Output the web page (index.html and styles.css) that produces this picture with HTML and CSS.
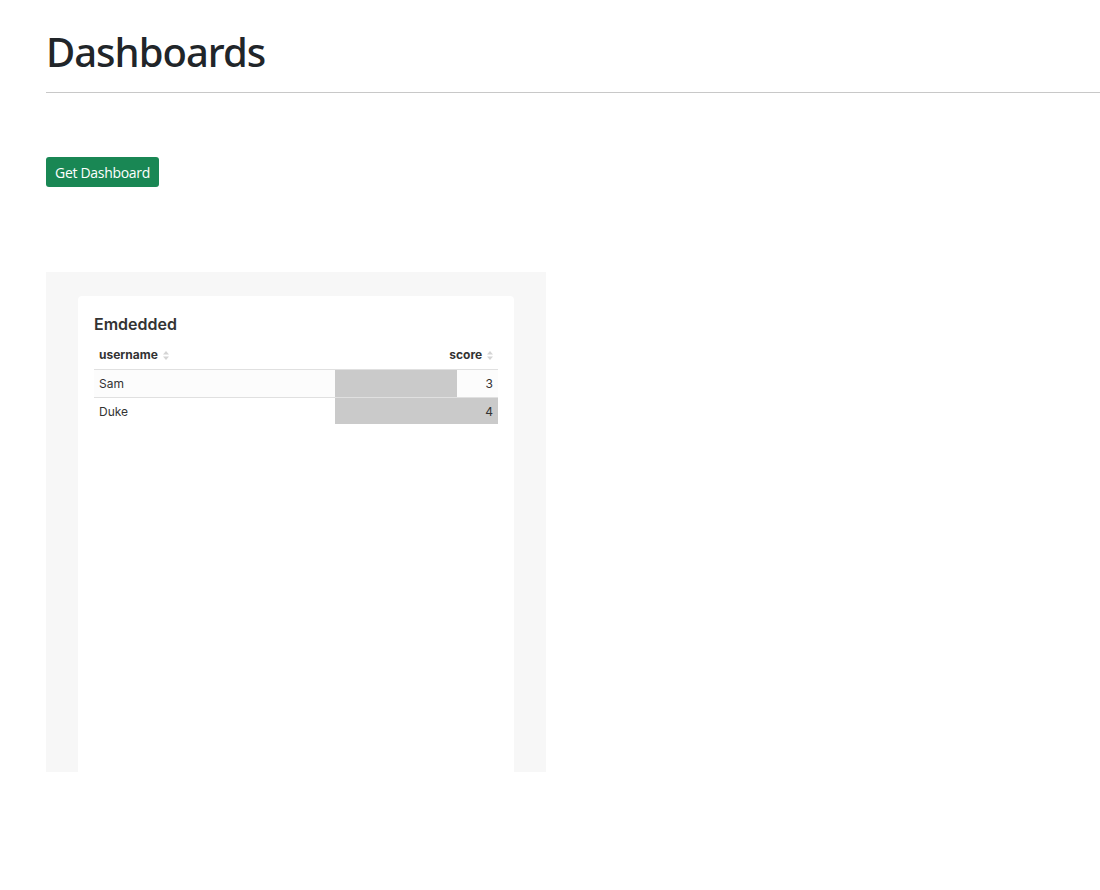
FILE: index.html
```html
<!DOCTYPE html>
<html>
<head>
<meta charset="utf-8">
<link rel="stylesheet" href="styles.css">
</head>
<body>
<div class="page">
  <h1 class="title">Dashboards</h1>
  <hr class="rule">
  <button class="btn">Get Dashboard</button>
  <div class="frame">
    <div class="card">
      <div class="card-title">Emdedded</div>
      <table class="grid">
        <thead>
          <tr>
            <th class="col-user">username <span class="sort"><svg width="6" height="9" viewBox="0 0 6 9"><path d="M3 0L6 3.5H0Z" fill="#d4d4d4"/><path d="M3 9L6 5.5H0Z" fill="#d4d4d4"/></svg></span></th>
            <th class="col-score">score <span class="sort"><svg width="6" height="9" viewBox="0 0 6 9"><path d="M3 0L6 3.5H0Z" fill="#d4d4d4"/><path d="M3 9L6 5.5H0Z" fill="#d4d4d4"/></svg></span></th>
          </tr>
        </thead>
        <tbody>
          <tr class="odd">
            <td class="col-user">Sam</td>
            <td class="col-score bar-cell"><div class="bar" style="width:75%"></div><span class="val">3</span></td>
          </tr>
          <tr>
            <td class="col-user">Duke</td>
            <td class="col-score bar-cell"><div class="bar" style="width:100%"></div><span class="val">4</span></td>
          </tr>
        </tbody>
      </table>
    </div>
  </div>
</div>
</body>
</html>
```
FILE: styles.css
```css
html, body {
  margin: 0;
  padding: 0;
  background: #fff;
}
.page {
  padding-left: 46px;
  font-family: "Open Sans", "Noto Sans", sans-serif;
}
.title {
  margin: 0;
  padding-top: 26px;
  font-family: "Noto Sans", "Open Sans", sans-serif;
  font-size: 40px;
  font-weight: 500;
  line-height: 52px;
  letter-spacing: -1px;
  color: #212529;
}
.rule {
  margin: 14px 0 0 0;
  border: 0;
  border-top: 1px solid #c8c8c8;
  height: 0;
}
.btn {
  display: block;
  margin-top: 64px;
  height: 30px;
  padding: 0 9px;
  background: #198754;
  color: #fff;
  border: 0;
  border-radius: 3px;
  font-family: "Open Sans", "Noto Sans", sans-serif;
  font-size: 14px;
  letter-spacing: -0.3px;
}
.frame {
  margin-top: 85px;
  width: 500px;
  height: 500px;
  background: #f7f7f7;
  box-sizing: border-box;
  padding: 24px 32px 0 32px;
  display: flex;
}
.card {
  flex: 1;
  background: #fff;
  border-radius: 4px 4px 0 0;
  padding: 19px 16px 0 16px;
  font-family: Inter, Roboto, sans-serif;
  color: #333;
}
.card-title {
  font-size: 16px;
  font-weight: 600;
  line-height: 18px;
  margin-bottom: 8px;
  color: #333;
}
.grid {
  width: 100%;
  border-collapse: collapse;
  font-size: 12px;
}
.grid th {
  font-weight: 700;
  height: 28px;
  padding: 0 5px;
  border-bottom: 1px solid #e0e0e0;
  vertical-align: middle;
}
.grid td {
  height: 27px;
  padding: 0 5px;
  border-bottom: 1px solid #e0e0e0;
  vertical-align: middle;
}
.grid tbody tr:last-child td {
  border-bottom: 0;
  height: 26px;
}
.odd td {
  background: #fcfcfc;
}
.col-user {
  text-align: left;
}
.col-score {
  text-align: right;
  width: 153px;
}
.sort {
  display: inline-block;
  margin-left: 2px;
  vertical-align: -1px;
}
.bar-cell {
  position: relative;
}
.bar {
  position: absolute;
  left: 0;
  top: 0;
  bottom: 0;
  background: #cacaca;
}
.val {
  position: relative;
}
```
